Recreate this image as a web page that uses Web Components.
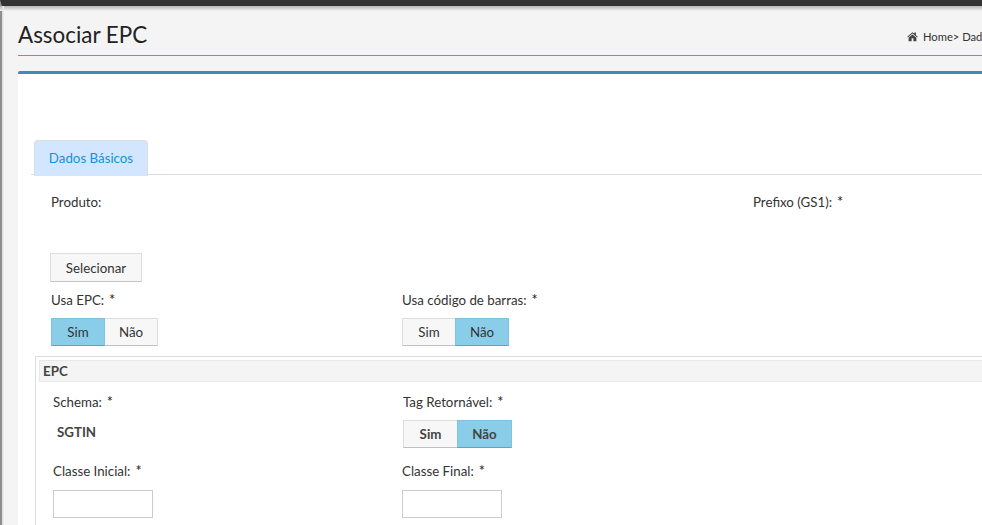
<!DOCTYPE html>
<html lang="pt">
<head>
<meta charset="utf-8">
<title>Associar EPC</title>
<style>
  html, body { margin: 0; height: 525px; overflow: hidden; }
  body { background: #f4f4f4; color: #333; font: 13.3px/18px Lato, "Noto Sans", sans-serif; }
</style>
</head>
<body>
<app-shell>
  <page-header title="Associar EPC" crumb="Home> Dados Básicos"></page-header>
  <content-box>
    <tab-strip label="Dados Básicos"></tab-strip>
    <form-row columns="702px 1fr" pad="18px 0 0 33px">
      <form-field label="Produto:"></form-field>
      <form-field label="Prefixo (GS1):" required></form-field>
    </form-row>
    <form-row columns="1fr" pad="42px 0 0 32px">
      <plain-button>Selecionar</plain-button>
    </form-row>
    <form-row columns="351px 1fr" pad="9px 0 0 33px">
      <form-field label="Usa EPC:" required gap="9px">
        <toggle-group first="Sim" second="Não" active="first"></toggle-group>
      </form-field>
      <form-field label="Usa código de barras:" required gap="9px">
        <toggle-group first="Sim" second="Não" active="second"></toggle-group>
      </form-field>
    </form-row>
    <epc-fieldset legend="EPC">
      <form-row columns="350px 1fr" pad="11px 0 0 14px">
        <form-field label="Schema:" required gap="12px">
          <strong class="sgtin" style="display:block;margin-left:4px;font-weight:700;color:#444">SGTIN</strong>
        </form-field>
        <form-field label="Tag Retornável:" required gap="9px">
          <toggle-group first="Sim" second="Não" active="second" bold></toggle-group>
        </form-field>
      </form-row>
      <form-row columns="349px 1fr" pad="14px 0 0 14px">
        <form-field label="Classe Inicial:" required gap="10px"><text-box></text-box></form-field>
        <form-field label="Classe Final:" required gap="10px"><text-box></text-box></form-field>
      </form-row>
    </epc-fieldset>
  </content-box>
</app-shell>

<script>
// Outer frame: dark bar on top, grey strip on the left
class AppShell extends HTMLElement {
  constructor() {
    super();
    this.attachShadow({ mode: 'open' });
    this.shadowRoot.innerHTML = `
      <style>
        :host { display: block; width: 1300px; height: 525px; box-sizing: border-box;
                border-top: 6px solid #333; border-left: 2px solid #8f8f8f; padding-left: 16px; position: relative; }
        .shade { position: absolute; left: -2px; right: 0; top: 0; height: 5px;
                 background: linear-gradient(#b5b5b5, #f4f4f4); }
        .side { position: absolute; left: 0; top: 0; bottom: 0; width: 2px;
                background: linear-gradient(90deg, #d6d6d6, #f4f4f4); }
      </style>
      <div class="shade"></div>
      <div class="side"></div>
      <slot></slot>
    `;
  }
}

class PageHeader extends HTMLElement {
  constructor() {
    super();
    this.attachShadow({ mode: 'open' });
    this.shadowRoot.innerHTML = `
      <style>
        :host { display: flex; align-items: center; box-sizing: border-box; height: 50px;
                padding-top: 9px; border-bottom: 1px solid #5b9bd5; margin-bottom: 15px; }
        h1 { flex: 0 0 889px; margin: 0; font-size: 22.4px; font-weight: 400; line-height: 38px; color: #222; }
        nav { display: flex; align-items: center; gap: 5px; font-size: 11.2px; line-height: 16px;
              color: #333; white-space: nowrap; padding-top: 3px; }
        svg { width: 11px; height: 11px; fill: #444; }
      </style>
      <h1></h1>
      <nav>
        <svg viewBox="0 0 24 24"><path d="M12 2.5 0.5 12.6l1.4 1.6L12 5.4l10.1 8.8 1.4-1.6L19.5 9.1V3.500h-3.500v2.500zM3.500 14.800V22.500h6.500v-6.500h4v6.500h6.500v-7.700L12 7.400z"/></svg>
        <span></span>
      </nav>
    `;
    this.shadowRoot.querySelector('h1').textContent = this.getAttribute('title');
    this.shadowRoot.querySelector('span').textContent = this.getAttribute('crumb');
  }
}

// White box with the blue top border
class ContentBox extends HTMLElement {
  constructor() {
    super();
    this.attachShadow({ mode: 'open' });
    this.shadowRoot.innerHTML = `
      <style>
        :host { display: block; background: #fff; border-top: 3px solid #3c8dbc; border-radius: 2px 0 0 0;
                padding: 66px 0 0 0; height: 460px; box-sizing: border-box; overflow: hidden; }
      </style>
      <slot></slot>
    `;
  }
}

class TabStrip extends HTMLElement {
  constructor() {
    super();
    this.attachShadow({ mode: 'open' });
    this.shadowRoot.innerHTML = `
      <style>
        :host { display: block; height: 34px; margin-left: 13px; border-bottom: 1px solid #ddd; position: relative; }
        .tab { position: absolute; left: 3px; top: 0; width: 114px; height: 36px; box-sizing: border-box;
               background: #d2e6ff; border: 1px solid #ddd; border-bottom: 0; border-radius: 4px 4px 0 0;
               color: #1a8fd8; text-align: center; line-height: 35px; }
      </style>
      <div class="tab"></div>
    `;
    this.shadowRoot.querySelector('.tab').textContent = this.getAttribute('label');
  }
}

class FormRow extends HTMLElement {
  constructor() {
    super();
    this.attachShadow({ mode: 'open' });
    this.shadowRoot.innerHTML = `
      <style>
        :host { display: grid; }
      </style>
      <slot></slot>
    `;
    this.style.gridTemplateColumns = this.getAttribute('columns');
    this.style.padding = this.getAttribute('pad');
  }
}

class FormField extends HTMLElement {
  constructor() {
    super();
    this.attachShadow({ mode: 'open' });
    this.shadowRoot.innerHTML = `
      <style>
        :host { display: flex; flex-direction: column; align-items: flex-start; min-width: 0; }
        label { display: flex; gap: 5px; white-space: nowrap; color: #333; }
        i { font-style: normal; color: #222; font-size: 14.5px; }
      </style>
      <label><span></span></label>
      <slot></slot>
    `;
    const label = this.shadowRoot.querySelector('label');
    label.querySelector('span').textContent = this.getAttribute('label');
    if (this.hasAttribute('required')) {
      const star = document.createElement('i');
      star.textContent = '*';
      label.appendChild(star);
    }
    label.style.marginBottom = this.getAttribute('gap') || '0';
  }
}

class PlainButton extends HTMLElement {
  constructor() {
    super();
    this.attachShadow({ mode: 'open' });
    this.shadowRoot.innerHTML = `
      <style>
        :host { display: block; justify-self: start; box-sizing: border-box; width: 92px; height: 29px;
                background: #f7f7f7; border: 1px solid #ddd; border-bottom-color: #c4c4c4;
                text-align: center; line-height: 29px; color: #333; }
      </style>
      <slot></slot>
    `;
  }
}

class ToggleGroup extends HTMLElement {
  constructor() {
    super();
    this.attachShadow({ mode: 'open' });
    this.shadowRoot.innerHTML = `
      <style>
        :host { display: flex; height: 28px; }
        div { box-sizing: border-box; width: 54px; height: 28px; text-align: center; line-height: 27px;
              background: #f7f7f7; border: 1px solid #ddd; border-bottom-color: #c0c0c0; color: #333; }
        div + div { margin-left: -1px; }
        .on { background: #89cde8; border-color: #7fc3de; border-bottom-color: #5fa3bd; position: relative; }
        :host([bold]) div { font-weight: 700; width: 55px; color: #444; }
      </style>
      <div id="a"></div><div id="b"></div>
    `;
    const a = this.shadowRoot.getElementById('a');
    const b = this.shadowRoot.getElementById('b');
    a.textContent = this.getAttribute('first');
    b.textContent = this.getAttribute('second');
    (this.getAttribute('active') === 'first' ? a : b).classList.add('on');
  }
}

class EpcFieldset extends HTMLElement {
  constructor() {
    super();
    this.attachShadow({ mode: 'open' });
    this.shadowRoot.innerHTML = `
      <style>
        :host { display: block; margin: 10px 0 0 17px; height: 300px; border: 1px solid #ddd; border-right: 0; padding: 3px 0 0 3px; }
        .legend { height: 22px; box-sizing: border-box; background: #f4f4f4; border: 1px solid #e8e8e8; border-right: 0;
                  padding-left: 3px; font-weight: 700; line-height: 20px; color: #444; }
      </style>
      <div class="legend"></div>
      <slot></slot>
    `;
    this.shadowRoot.querySelector('.legend').textContent = this.getAttribute('legend');
  }
}

class TextBox extends HTMLElement {
  constructor() {
    super();
    this.attachShadow({ mode: 'open' });
    this.shadowRoot.innerHTML = `
      <style>
        :host { display: block; }
        input { display: block; box-sizing: border-box; width: 100px; height: 28px; margin: 0; padding: 0 6px;
                border: 1px solid #ccc; background: #fff; font: inherit; outline: 0; }
      </style>
      <input type="text">
    `;
  }
}

customElements.define('app-shell', AppShell);
customElements.define('page-header', PageHeader);
customElements.define('content-box', ContentBox);
customElements.define('tab-strip', TabStrip);
customElements.define('form-row', FormRow);
customElements.define('form-field', FormField);
customElements.define('plain-button', PlainButton);
customElements.define('toggle-group', ToggleGroup);
customElements.define('epc-fieldset', EpcFieldset);
customElements.define('text-box', TextBox);
</script>
</body>
</html>
